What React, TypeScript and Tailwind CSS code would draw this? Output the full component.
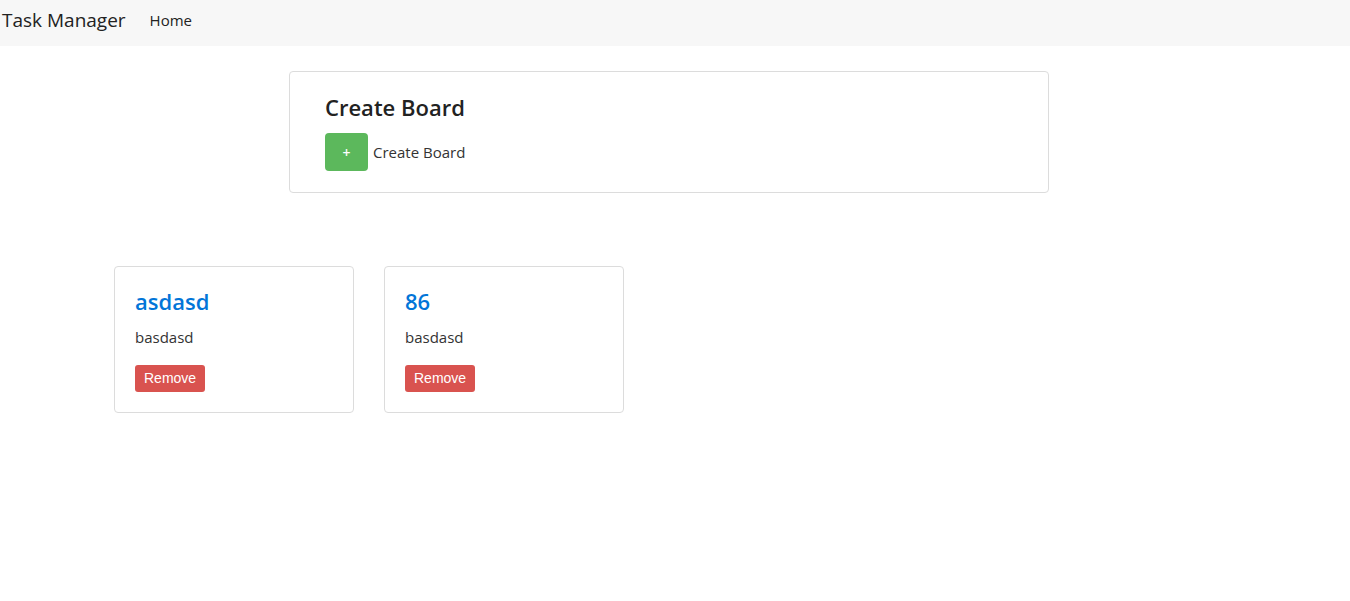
const boards = [
  { title: "asdasd", description: "basdasd" },
  { title: "86", description: "basdasd" },
];

function Navbar() {
  return (
    <nav className="flex h-[46px] items-center bg-[#f7f7f7] pb-[6px]">
      <span className="ml-[2px] text-[19px] text-[#222]">Task Manager</span>
      <a className="ml-[24px] text-[15px] text-[#222]">Home</a>
    </nav>
  );
}

function CreateBoard() {
  return (
    <div className="ml-[289px] mt-[25px] w-[760px] rounded-[4px] border border-[#dcdcdc] px-[35px] pb-[21px] pt-[19px]">
      <h2 className="text-[22px] font-semibold leading-[32px] text-[#222]">Create Board</h2>
      <div className="mt-[10px] flex items-center">
        <button className="h-[38px] w-[43px] rounded-[4px] bg-[#5cb85c] text-[14px] font-semibold text-white">+</button>
        <span className="ml-[5px] text-[15px] text-[#333]">Create Board</span>
      </div>
    </div>
  );
}

function BoardCard({ title, description }: { title: string; description: string }) {
  return (
    <div className="h-[147px] w-[240px] rounded-[4px] border border-[#dcdcdc] px-[20px] pt-[19px]">
      <h3 className="text-[22px] font-semibold leading-[30px] text-[#0275d8]">{title}</h3>
      <p className="mt-[11px] text-[15px] leading-[20px] text-[#333]">{description}</p>
      <button
        className="mt-[18px] h-[27px] rounded-[3px] bg-[#d9534f] px-[9px] text-[14px] text-white"
        style={{ fontFamily: '"Liberation Sans", Arial, sans-serif' }}
      >
        Remove
      </button>
    </div>
  );
}

export default function App() {
  return (
    <div className="min-h-[601px] bg-white" style={{ fontFamily: '"Open Sans", "Noto Sans", sans-serif' }}>
      <Navbar />
      <CreateBoard />
      <div className="ml-[114px] mt-[73px] flex gap-[30px]">
        {boards.map((b, i) => (
          <BoardCard key={i} title={b.title} description={b.description} />
        ))}
      </div>
    </div>
  );
}
